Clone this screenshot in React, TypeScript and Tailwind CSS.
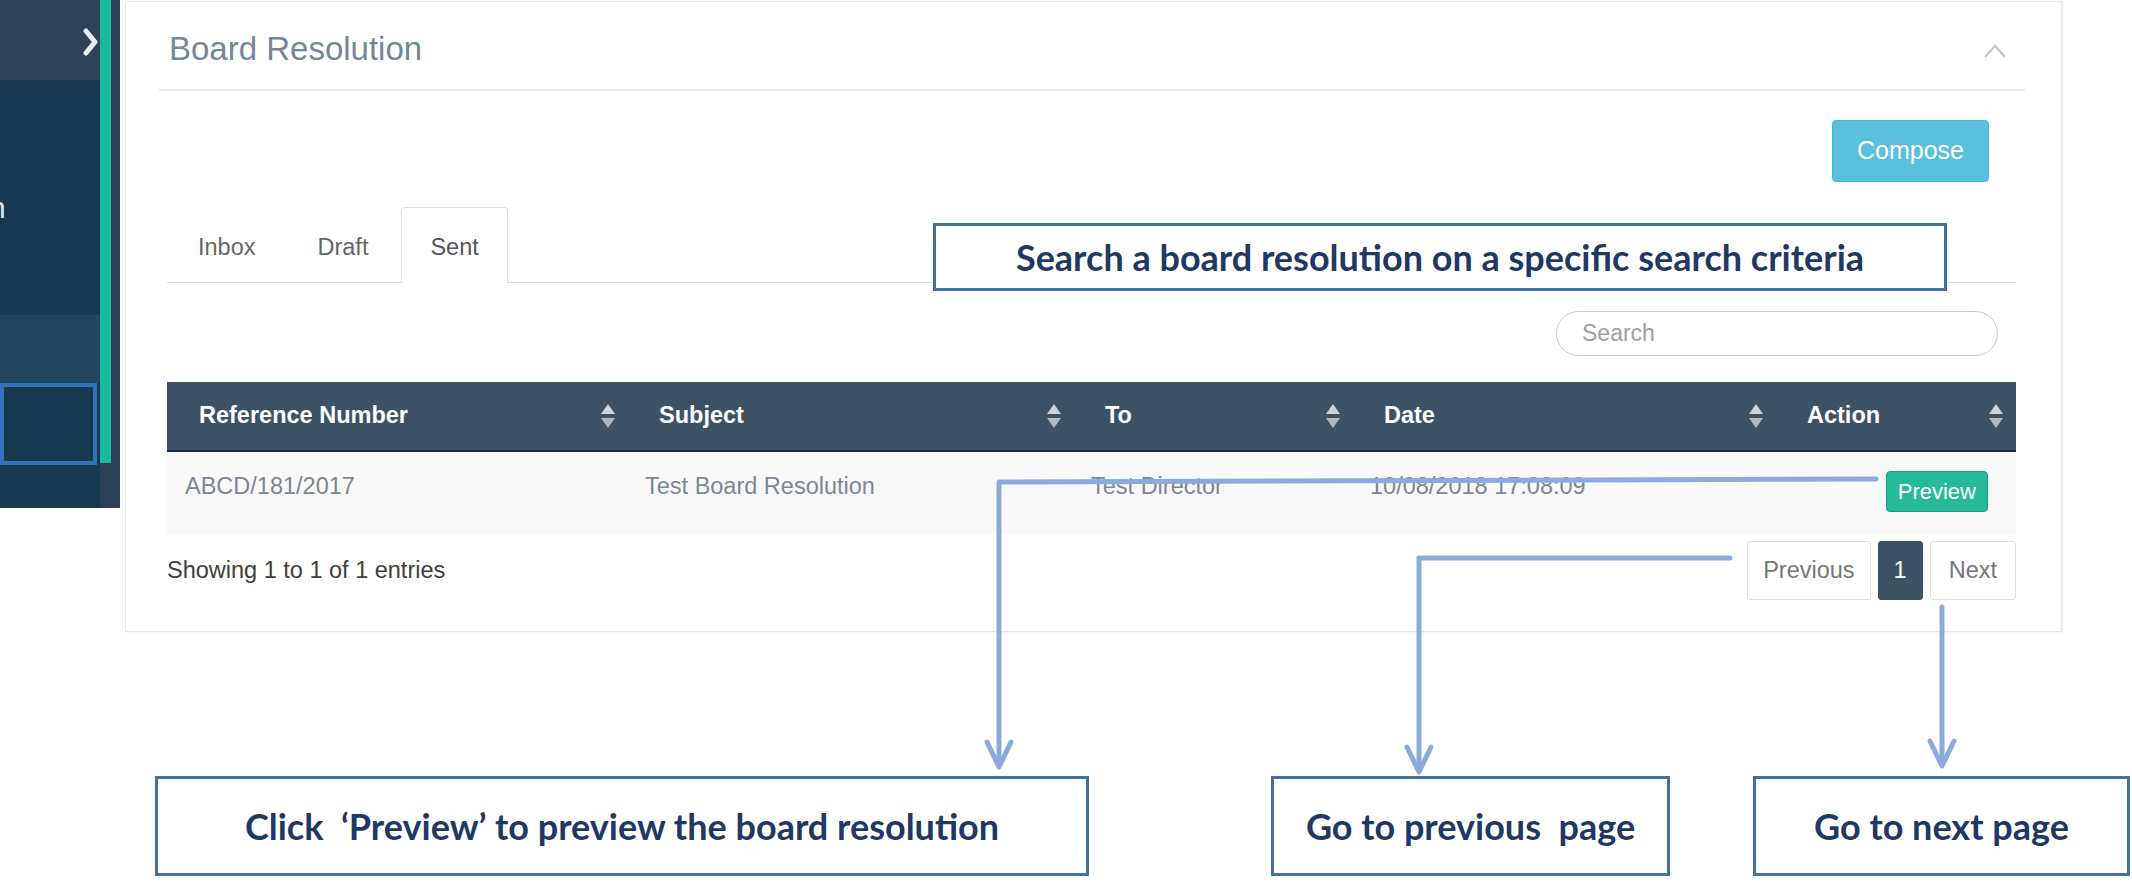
import React from 'react';

const SortIcon: React.FC = () => (
  <svg width="16" height="26" viewBox="0 0 16 26" className="shrink-0">
    <path d="M8 1 L15 11 L1 11 Z" fill="#cfd3d7" />
    <path d="M8 25 L15 15 L1 15 Z" fill="#b3b8bd" />
  </svg>
);

const columns = ['Reference Number', 'Subject', 'To', 'Date', 'Action'];

const Sidebar: React.FC = () => (
  <aside className="flex h-[508px] w-[120px] shrink-0 bg-[#2b3f55]">
    <div className="flex w-[100px] flex-col bg-[#183a50]">
      <div className="flex h-[82px] items-start justify-end border-b-2 border-[#213649] bg-[#2f4358] pt-[27px]">
        <svg width="17" height="30" viewBox="0 0 17 30">
          <polyline
            points="3,4 12,15 3,26"
            fill="none"
            stroke="#e9eef2"
            strokeWidth="5"
            strokeLinecap="round"
            strokeLinejoin="round"
          />
        </svg>
      </div>
      <div className="h-[233px] overflow-hidden pt-[108px] text-[30px] leading-[36px] text-[#dfe6ec]">
        <span className="-ml-[11px] block">n</span>
      </div>
      <div className="h-[68px] bg-[#21465b]" />
      <div className="pr-[3px]">
        <div className="h-[82px] border-4 border-[#3273bb] bg-[#183a50]" />
      </div>
      <div className="flex-1" />
    </div>
    <div className="h-[463px] w-[11px] bg-[#1abb9c]" />
  </aside>
);

const Card: React.FC = () => (
  <section className="mt-[1px] h-[631px] w-[1937px] shrink-0 border border-[#e3e6ea] bg-white pl-[33px] pr-[36px] shadow-[1px_1px_3px_rgba(0,0,0,0.06)]">
    {/* Title */}
    <div className="flex h-[89px] items-start justify-between border-b-2 border-[#e6e9ed] pl-[10px] pt-[27px]">
      <h2 className="text-[33px] leading-[40px] text-[#73879c]">Board Resolution</h2>
      <svg width="24" height="16" viewBox="0 0 24 16" className="mr-[18px] mt-[14px]">
        <polyline points="2,14 12,3 22,14" fill="none" stroke="#c3c7cc" strokeWidth="2.2" />
      </svg>
    </div>

    <div className="pl-[8px] pr-[9px]">
      <div className="mt-[29px] flex justify-end pr-[27px]">
        <button className="h-[62px] w-[157px] rounded-[4px] border border-[#46b8da] bg-[#5bc0de] text-[25px] text-white">
          Compose
        </button>
      </div>

      {/* Tabs */}
      <div className="mt-[26px] flex h-[75px] items-end border-b border-[#dddddd] pl-[2px]">
        {['Inbox', 'Draft', 'Sent'].map((t) => (
          <div
            key={t}
            className={`-mb-px mr-[4px] flex h-[76px] items-center rounded-t-[4px] border border-b-0 px-[28px] pt-[4px] text-[23.5px] ${
              t === 'Sent' ? 'border-[#dddddd] bg-white text-[#555555]' : 'border-transparent text-[#666666]'
            }`}
          >
            {t}
          </div>
        ))}
      </div>

      <div className="mt-[28px] flex justify-end pr-[18px]">
        <input
          placeholder="Search"
          className="h-[45px] w-[442px] rounded-full border border-[#cccccc] pl-[25px] text-[23px] text-[#555] outline-none placeholder:text-[#a0a0a0]"
        />
      </div>

      {/* Table */}
      <div className="mt-[26px]">
        <div className="grid h-[70px] grid-cols-[460px_446px_279px_423px_240px] border-b-2 border-[#1f2b36] bg-[#3e5266]">
          {columns.map((c) => (
            <div key={c} className="flex items-center justify-between pl-[32px] pr-[11px] text-[23.5px] font-bold text-white">
              <span>{c}</span>
              <SortIcon />
            </div>
          ))}
        </div>
        <div className="grid h-[82px] grid-cols-[460px_446px_279px_423px_240px] bg-[#f9f9f9] text-[23.5px] leading-[33px] text-[#7b8794]">
          <div className="pl-[18px] pt-[18px]">ABCD/181/2017</div>
          <div className="pl-[18px] pt-[18px]">Test Board Resolution</div>
          <div className="pl-[18px] pt-[18px]">Test Director</div>
          <div className="pl-[18px] pt-[18px]">10/08/2018 17:08:09</div>
          <div className="flex items-start justify-end pr-[27px] pt-[19px]">
            <button className="flex h-[41px] items-center rounded-[4px] border border-[#169f85] bg-[#26b99a] px-[11px] text-[22px] leading-none text-white">
              Preview
            </button>
          </div>
        </div>
      </div>

      <div className="mt-[7px] flex items-center justify-between">
        <span className="text-[23.5px] text-[#404040]">Showing 1 to 1 of 1 entries</span>
        <div className="flex gap-[7px]">
          <button className="h-[59px] rounded-[3px] border border-[#dddddd] bg-white px-[15px] text-[23.5px] text-[#777777]">
            Previous
          </button>
          <button className="h-[59px] rounded-[3px] border border-[#3e5266] bg-[#3e5266] px-[15px] text-[23.5px] text-white">
            1
          </button>
          <button className="h-[59px] rounded-[3px] border border-[#dddddd] bg-white px-[18px] text-[23.5px] text-[#777777]">
            Next
          </button>
        </div>
      </div>
    </div>
  </section>
);

const calloutBase =
  "absolute flex items-center justify-center whitespace-pre border-[3px] border-[#41719c] bg-white font-['Lato',sans-serif] text-[36px] font-bold text-[#1f3864]";

const Annotations: React.FC = () => (
  <div className="pointer-events-none absolute inset-0">
    <svg className="absolute left-0 top-0" width="2132" height="895">
      <g fill="none" stroke="#8eaadb" strokeWidth="5" strokeLinecap="round" strokeLinejoin="round">
        <polyline points="1876,479 999,482 999,765" />
        <polyline points="987,742 999,767 1011,742" />
        <polyline points="1730,558 1419,558 1419,770" />
        <polyline points="1407,747 1419,772 1431,747" />
        <polyline points="1942,607 1942,764" />
        <polyline points="1930,741 1942,766 1954,741" />
      </g>
    </svg>

    <div className={`${calloutBase} left-[933px] top-[223px] h-[68px] w-[1014px]`}>
      Search a board resolution on a specific search criteria
    </div>
    <div className={`${calloutBase} left-[155px] top-[776px] h-[100px] w-[934px]`}>
      Click  ‘Preview’ to preview the board resolution
    </div>
    <div className={`${calloutBase} left-[1271px] top-[776px] h-[100px] w-[399px]`}>
      Go to previous  page
    </div>
    <div className={`${calloutBase} left-[1753px] top-[776px] h-[100px] w-[377px]`}>
      Go to next page
    </div>
  </div>
);

export default function App() {
  return (
    <div className="relative h-[895px] w-[2132px] overflow-hidden bg-white font-['Liberation_Sans',Arial,sans-serif]">
      <div className="flex items-start gap-[5px]">
        <Sidebar />
        <Card />
      </div>
      <Annotations />
    </div>
  );
}
